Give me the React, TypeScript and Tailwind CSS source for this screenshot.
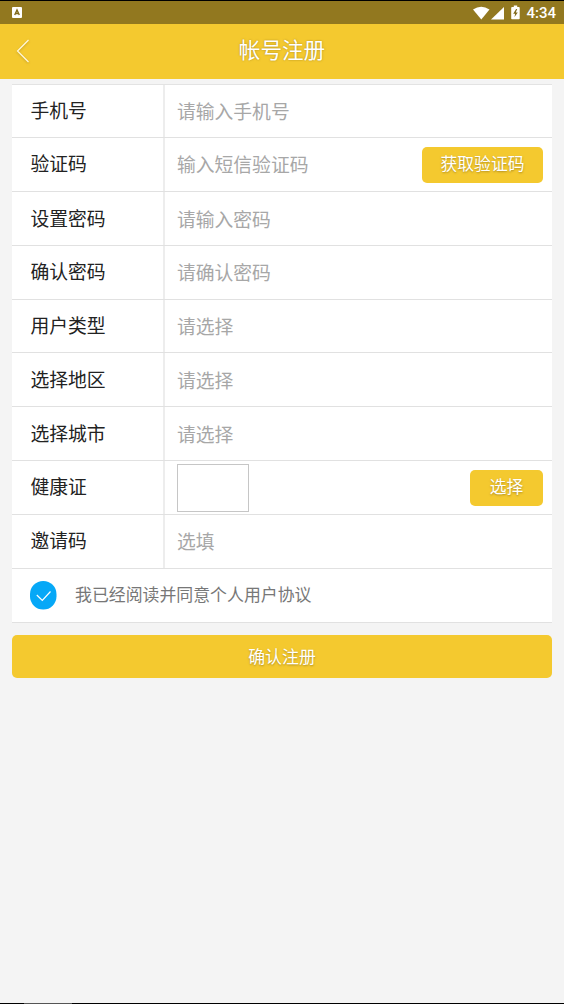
import React from "react";

type Row = {
  label: string;
  hint?: string;
  action?: string;
  photo?: boolean;
  height: string;
  labelPad: string;
  hintPad: string;
};

const rows: Row[] = [
  { label: "手机号", hint: "请输入手机号", height: "h-[53px]", labelPad: "pt-[11px]", hintPad: "pt-[12px]" },
  { label: "验证码", hint: "输入短信验证码", action: "获取验证码", height: "h-[54px]", labelPad: "pt-[11px]", hintPad: "pt-[12px]" },
  { label: "设置密码", hint: "请输入密码", height: "h-[54px]", labelPad: "pt-[12px]", hintPad: "pt-[13px]" },
  { label: "确认密码", hint: "请确认密码", height: "h-[54px]", labelPad: "pt-[11px]", hintPad: "pt-[12px]" },
  { label: "用户类型", hint: "请选择", height: "h-[53px]", labelPad: "pt-[11px]", hintPad: "pt-[12px]" },
  { label: "选择地区", hint: "请选择", height: "h-[54px]", labelPad: "pt-[12px]", hintPad: "pt-[13px]" },
  { label: "选择城市", hint: "请选择", height: "h-[54px]", labelPad: "pt-[12px]", hintPad: "pt-[13px]" },
  { label: "健康证", photo: true, action: "选择", height: "h-[54px]", labelPad: "pt-[11px]", hintPad: "pt-[3px]" },
  { label: "邀请码", hint: "选填", height: "h-[54px]", labelPad: "pt-[11px]", hintPad: "pt-[12px]" },
];

function StatusBar() {
  return (
    <div className="flex h-6 items-center border-t border-black bg-[#92781f] pl-3 pr-2">
      <svg width="10" height="11" viewBox="0 0 10 11">
        <rect width="10" height="11" rx="1" fill="#fff" />
        <path d="M2.7 8 L5 3 L7.3 8 M3.6 6.5 H6.4" fill="none" stroke="#80691b" strokeWidth="1.4" />
      </svg>
      <div className="ml-auto flex items-center">
        <svg width="48" height="16" viewBox="0 0 48 16" fill="#fff">
          <path d="M0 4.6 Q8.2 -1.2 16.5 4.6 L8.3 14.5 Z" />
          <path d="M31 2 V14.5 H18 Z" />
          <path d="M40.8 .5 h3.4 v1.5 h1.6 q.9 0 .9.8 v10.6 q0 .8-.8.8 h-6.9 q-.8 0-.8-.8 v-10.6 q0-.8.9-.8 h1.7 Z" />
          <path d="M43.1 4 L40.2 8.7 H42.1 L41.5 12 L44.8 7.4 H42.8 L44.2 4 Z" fill="#80691b" />
        </svg>
        <span className="ml-[5px] pt-px font-[Roboto] text-[15px] leading-[23px] font-medium text-white">4:34</span>
      </div>
    </div>
  );
}

function FieldRow({ row }: { row: Row }) {
  return (
    <div className={`flex border-b border-[#e1e1e1] ${row.height}`}>
      <div className={`w-[153px] shrink-0 border-r-2 border-[#ededed] pl-[18.5px] text-[18.8px] leading-[28px] text-[#222] ${row.labelPad}`}>
        {row.label}
      </div>
      <div className={`flex-1 pl-3 text-[18.8px] leading-[28px] text-[#a7a7a7] ${row.hintPad}`}>
        {row.photo ? <div className="h-12 w-[72px] border border-[#c6c6c6]" /> : row.hint}
      </div>
      {row.action && (
        <button
          className={`mt-[9px] mr-[9px] h-9 rounded-[5px] bg-[#f4c92f] pb-[4px] text-[16.8px] leading-[32px] text-white [text-shadow:0_1px_2px_#80651899] ${row.photo ? "w-[73px]" : "w-[121px]"}`}
        >
          {row.action}
        </button>
      )}
    </div>
  );
}

export default function App() {
  return (
    <div className="flex h-[1004px] w-[564px] flex-col overflow-hidden bg-[#f4f4f4] font-['Noto_Sans_CJK_SC',sans-serif]">
      <StatusBar />
      <header className="flex h-[55px] items-start bg-[#f4c92f]">
        <svg className="mt-[14px] ml-[16px] drop-shadow-[0_1px_1px_#9a7a2088]" width="14" height="25" viewBox="0 0 14 25">
          <path d="M12.5 2 L1.5 13 L12.5 24" fill="none" stroke="#fff8de" strokeWidth="1.2" />
        </svg>
        <h1 className="flex-1 pt-[9px] pr-[30px] text-center text-[21.6px] leading-[32px] text-white [text-shadow:0_0_2px_#806518aa]">
          帐号注册
        </h1>
      </header>
      <main className="flex-1 px-3 pt-[5px]">
        <section className="border-t border-[#e3e3e3] bg-white">
          {rows.map((row) => (
            <FieldRow key={row.label} row={row} />
          ))}
          <div className="flex h-[54px] items-start border-b border-[#e1e1e1] pt-3 pl-[18px]">
            <svg width="27" height="29" viewBox="0 0 27 29">
              <rect width="26.5" height="28.5" rx="13.2" fill="#06a8f7" />
              <path d="M6.8 14 L12.3 19.5 L20.5 10.5" fill="none" stroke="#fff" strokeWidth="1.2" />
            </svg>
            <span className="ml-[18px] text-[16.9px] leading-[26px] text-[#777]">我已经阅读并同意个人用户协议</span>
          </div>
        </section>
        <button className="mt-3 h-[43px] w-full rounded-[5px] bg-[#f4c92f] pb-[2px] text-[16.9px] leading-[41px] text-white [text-shadow:0_1px_2px_#80651899]">
          确认注册
        </button>
      </main>
      <div className="flex h-px bg-black">
        <div className="ml-6 w-12 bg-[#555]" />
      </div>
    </div>
  );
}
